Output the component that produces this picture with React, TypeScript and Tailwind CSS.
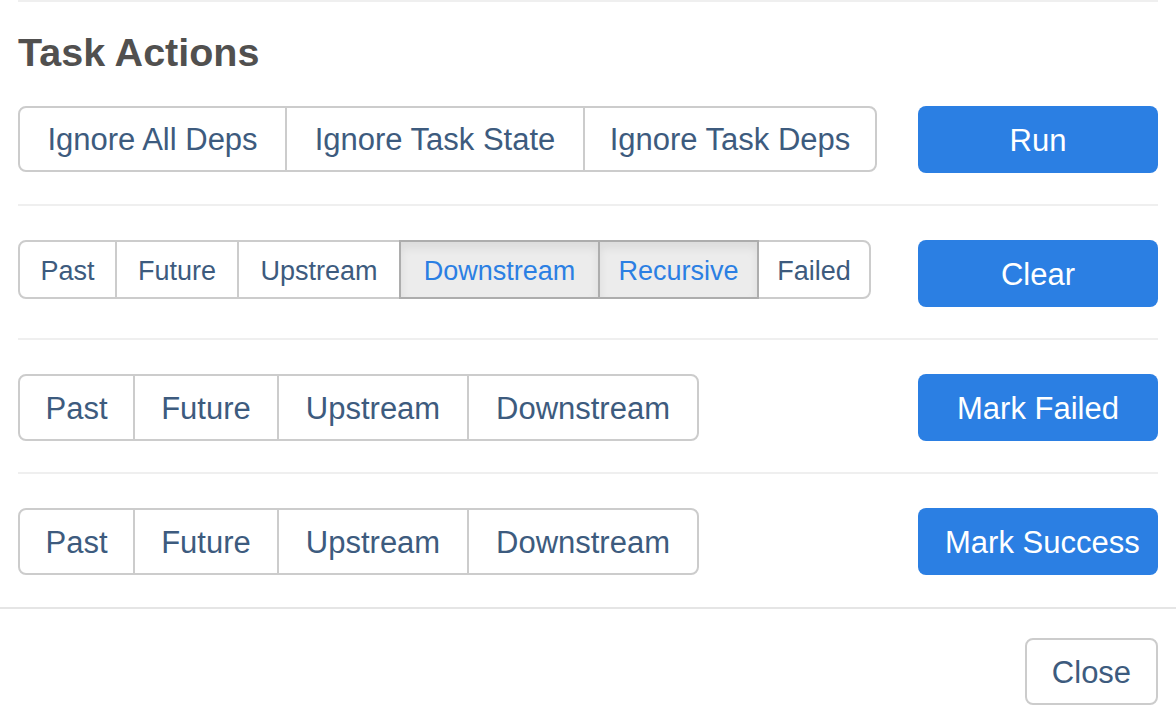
import React from 'react';

type Seg = { label: string; w: number; active?: boolean };

const font = { fontFamily: '"Liberation Sans", Arial, sans-serif' };

const SegGroup: React.FC<{ items: Seg[]; h: string; size: string }> = ({ items, h, size }) => (
  <div className={`flex ${h}`}>
    {items.map((s, i) => (
      <div
        key={s.label}
        style={{ width: s.w }}
        className={[
          'flex items-center justify-center border-2 shrink-0 pt-[3px]',
          size,
          i > 0 ? '-ml-[2px]' : '',
          i === 0 ? 'rounded-l-[8px]' : '',
          i === items.length - 1 ? 'rounded-r-[8px]' : '',
          s.active
            ? 'relative z-10 border-[#adadad] bg-[#ececec] text-[#2b7fe3] shadow-[inset_0_6px_10px_rgba(0,0,0,0.07)]'
            : 'border-[#cccccc] bg-white text-[#3d5b7e]',
        ].join(' ')}
      >
        {s.label}
      </div>
    ))}
  </div>
);

const BlueButton: React.FC<{ label: string; left?: boolean }> = ({ label, left }) => (
  <div
    className={`flex items-center h-[67px] w-[240px] shrink-0 rounded-[8px] bg-[#2b7fe3] text-white text-[31px] pt-[3px] whitespace-nowrap overflow-visible ${
      left ? 'justify-start pl-[27px]' : 'justify-center'
    }`}
  >
    {label}
  </div>
);

const Divider = () => <div className="h-[2px] bg-[#efefef] mt-[31px] mb-[34px]" />;

export default function App() {
  return (
    <div className="w-[1176px] h-[728px] bg-white overflow-hidden" style={font}>
      <div className="px-[18px]">
        <div className="h-[2px] bg-[#efefef]" />
        <h2 className="mt-[30px] text-[39.5px] leading-[40px] font-bold text-[#51504f]">Task Actions</h2>
        <div className="mt-[34px]">
          <div className="flex justify-between items-start">
            <SegGroup
              h="h-[66px]"
              size="text-[31px]"
              items={[
                { label: 'Ignore All Deps', w: 269 },
                { label: 'Ignore Task State', w: 300 },
                { label: 'Ignore Task Deps', w: 294 },
              ]}
            />
            <BlueButton label="Run" />
          </div>
          <Divider />
          <div className="flex justify-between items-start">
            <SegGroup
              h="h-[59px]"
              size="text-[27px]"
              items={[
                { label: 'Past', w: 99 },
                { label: 'Future', w: 124 },
                { label: 'Upstream', w: 164 },
                { label: 'Downstream', w: 201, active: true },
                { label: 'Recursive', w: 161, active: true },
                { label: 'Failed', w: 114 },
              ]}
            />
            <BlueButton label="Clear" />
          </div>
          <Divider />
          <div className="flex justify-between items-start">
            <SegGroup
              h="h-[67px]"
              size="text-[31px]"
              items={[
                { label: 'Past', w: 117 },
                { label: 'Future', w: 146 },
                { label: 'Upstream', w: 192 },
                { label: 'Downstream', w: 232 },
              ]}
            />
            <BlueButton label="Mark Failed" />
          </div>
          <Divider />
          <div className="flex justify-between items-start">
            <SegGroup
              h="h-[67px]"
              size="text-[31px]"
              items={[
                { label: 'Past', w: 117 },
                { label: 'Future', w: 146 },
                { label: 'Upstream', w: 192 },
                { label: 'Downstream', w: 232 },
              ]}
            />
            <BlueButton label="Mark Success" left />
          </div>
        </div>
      </div>
      <div className="mt-[32px] h-[2px] bg-[#e5e5e5]" />
      <div className="flex justify-end px-[18px] pt-[29px]">
        <div className="flex items-center justify-center h-[67px] w-[133px] pt-[3px] rounded-[8px] border-2 border-[#cccccc] text-[31px] text-[#3d5b7e]">
          Close
        </div>
      </div>
    </div>
  );
}
